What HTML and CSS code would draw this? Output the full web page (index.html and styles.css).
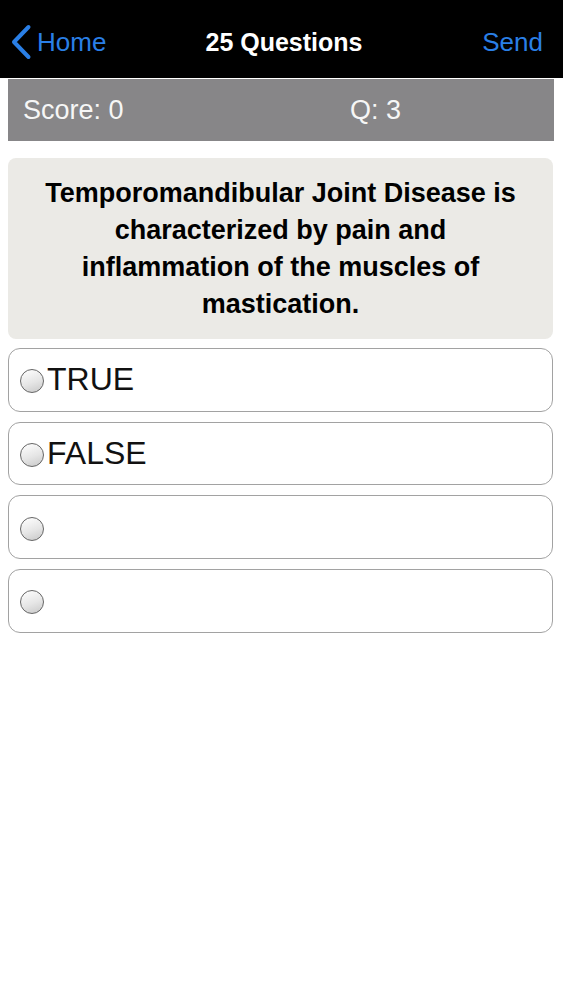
FILE: index.html
```html
<!DOCTYPE html>
<html>
<head>
<meta charset="utf-8">
<link rel="stylesheet" href="styles.css">
</head>
<body>
<header class="nav">
  <a class="nav-back">
    <svg class="chev" width="22" height="36" viewBox="0 0 22 36"><polyline points="18.5,3 4,18 18.5,33" fill="none" stroke="#2a7fe6" stroke-width="4" stroke-linecap="round" stroke-linejoin="round"/></svg>
    <span>Home</span>
  </a>
  <div class="nav-title">25 Questions</div>
  <a class="nav-send">Send</a>
</header>
<div class="scorebar">
  <span class="score">Score: 0</span>
  <span class="qnum">Q: 3</span>
</div>
<div class="question">Temporomandibular Joint Disease is characterized by pain and inflammation of the muscles of mastication.</div>
<div class="options">
  <div class="option"><span class="radio"></span><span class="label">TRUE</span></div>
  <div class="option"><span class="radio"></span><span class="label">FALSE</span></div>
  <div class="option"><span class="radio"></span><span class="label"></span></div>
  <div class="option"><span class="radio"></span><span class="label"></span></div>
</div>
</body>
</html>
```

FILE: styles.css
```css
html, body {
  margin: 0;
  padding: 0;
  background: #ffffff;
  font-family: "Liberation Sans", Arial, sans-serif;
}
.nav {
  height: 78px;
  background: #000;
  display: flex;
  align-items: center;
  justify-content: space-between;
  padding: 6px 20px 0 10px;
  box-sizing: border-box;
  position: relative;
}
.nav-back {
  display: flex;
  align-items: center;
  gap: 5px;
  color: #2a7fe6;
  font-size: 26px;
}
.chev { display: block; }
.nav-title {
  position: absolute;
  left: 0;
  right: 0;
  top: 6px;
  bottom: 0;
  display: flex;
  align-items: center;
  justify-content: center;
  color: #fff;
  font-size: 25px;
  font-weight: bold;
  pointer-events: none;
  padding-left: 5px;
}
.nav-send {
  color: #2a7fe6;
  font-size: 26px;
}
.scorebar {
  margin: 1px 9px 0 8px;
  height: 62px;
  background: #878688;
  display: flex;
  align-items: center;
  color: #f6f6f6;
  font-size: 27px;
  padding-left: 15px;
}
.score { width: 327px; }
.question {
  margin: 17px 10px 0 8px;
  background: #ebeae6;
  border-radius: 8px;
  padding: 17px 24px 16px;
  font-size: 27px;
  font-weight: bold;
  line-height: 37px;
  text-align: center;
  color: #000;
}
.options {
  margin: 9px 10px 0 8px;
  display: flex;
  flex-direction: column;
  gap: 10px;
}
.option {
  height: 63.7px;
  box-sizing: border-box;
  border: 1px solid #a2a2a2;
  border-radius: 12px;
  display: flex;
  align-items: center;
  padding-left: 11px;
  gap: 3px;
}
.radio {
  width: 22px;
  height: 22px;
  border-radius: 50%;
  border: 1.5px solid #666;
  background: linear-gradient(160deg, #ffffff 0%, #e6e6e6 55%, #c8c8c8 100%);
  margin-top: 3px;
  flex: none;
}
.label {
  font-size: 32px;
  color: #111;
}
```
